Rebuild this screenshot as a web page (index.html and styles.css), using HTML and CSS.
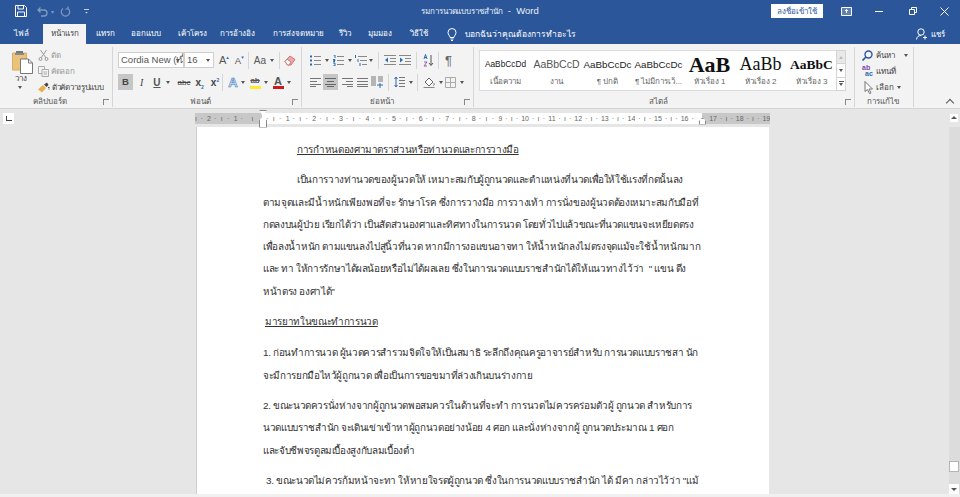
FILE: index.html
```html
<!DOCTYPE html>
<html lang="th">
<head>
    <meta charset="UTF-8">
    <meta name="viewport" content="width=device-width, initial-scale=1.0">
    <title>รมการนวดแบบราชสำนัก - Word</title>
    <link rel="stylesheet" href="styles.css">
</head>
<body>
    <header class="titlebar">
        <div class="qat">
            <svg class="qat-save" width="12" height="12" viewBox="0 0 12 12"><path d="M.5.5h9l2 2v9H.5z" fill="none" stroke="#fff"/><path d="M3 .5v3.500h5.500V.5M2.500 11.500V7h7v4.500" fill="none" stroke="#fff"/></svg>
            <svg class="qat-undo" width="11" height="11" viewBox="0 0 11 11"><path d="M1 4h6a3 3 0 0 1 0 6H4M3.500 1.500 1 4l2.500 2.500" fill="none" stroke="#7f9ac3" stroke-width="1.300"/></svg>
            <span class="qat-dim">▾</span>
            <svg class="qat-redo" width="11" height="11" viewBox="0 0 11 11"><path d="M3 2.500a4.200 4.200 0 1 0 5 0M8 .5v2.500H5.500" fill="none" stroke="#7f9ac3" stroke-width="1.200"/></svg>
            <span class="qat-more"></span>
        </div>
        <div class="doc-title"><span class="doc-name">รมการนวดแบบราชสำนัก</span> &nbsp;-&nbsp; Word</div>
        <div class="win">
            <button class="signin">ลงชื่อเข้าใช้</button>
            <svg class="win-display" width="11" height="9" viewBox="0 0 11 9"><path d="M.5.5h10v8H.5z" fill="#fff" fill-opacity=".25" stroke="#fff"/><path d="M5.500 6V2.500M4 4l1.500-1.500L7 4" stroke="#fff" fill="none"/></svg>
            <span class="win-min"></span>
            <svg class="win-restore" width="8" height="8" viewBox="0 0 8 8"><path d="M.5 2.500h5v5h-5zM2.500 2.500v-2h5v5h-2" fill="none" stroke="#fff"/></svg>
            <svg class="win-close" width="9" height="9" viewBox="0 0 9 9"><path d="M.5.5l8 8M8.500.5l-8 8" stroke="#fff"/></svg>
        </div>
    </header>

    <nav class="tabs">
        <span class="tab tab-file">ไฟล์</span>
        <span class="tab tab-active">หน้าแรก</span>
        <span class="tab tab-insert">แทรก</span>
        <span class="tab tab-design">ออกแบบ</span>
        <span class="tab tab-layout">เค้าโครง</span>
        <span class="tab tab-refs">การอ้างอิง</span>
        <span class="tab tab-mail">การส่งจดหมาย</span>
        <span class="tab tab-review">รีวิว</span>
        <span class="tab tab-view">มุมมอง</span>
        <span class="tab tab-help">วิธีใช้</span>
        <svg class="bulb" width="10" height="13" viewBox="0 0 10 13"><path d="M3 9.500C3 7.500 1 7 1 4.500a4 4 0 0 1 8 0C9 7 7 7.500 7 9.500zM3.500 11h3M4 12.500h2" fill="none" stroke="#fff"/></svg>
        <span class="tell">บอกฉันว่าคุณต้องการทำอะไร</span>
        <span class="share">
            <svg width="12" height="12" viewBox="0 0 12 12"><circle cx="5" cy="4" r="3.200" fill="none" stroke="#fff"/><path d="M.5 11.500c.5-3 2-4 4.500-4M9 7.500v4M7 9.500h4" fill="none" stroke="#fff"/></svg>
            แชร์
        </span>
    </nav>

    <section class="ribbon">
        <div class="group group-clip">
            <div class="group-body clip-body">
                <div class="paste">
                    <svg width="21" height="24" viewBox="0 0 21 24"><path d="M.5 3h14v17H.5z" fill="#e9c27c" stroke="#d9ae63"/><path d="M4 3h7V1H4z" fill="#777"/><path d="M3 3h9v2H3z" fill="#8a8a8a"/><path d="M8.500 9h8l4 4v10.500h-12z" fill="#fff" stroke="#777"/><path d="M16.500 9v4h4" fill="none" stroke="#777"/></svg>
                    <span class="paste-label">วาง</span>
                    <span class="caret"></span>
                </div>
                <div class="clip-list">
                    <div class="clip-item dim">
                        <svg width="11" height="11" viewBox="0 0 11 11"><path d="M2.500 0l5.500 8M8.500 0 3 8" stroke="#999" fill="none"/><circle cx="2.500" cy="9" r="1.500" fill="none" stroke="#999"/><circle cx="8.500" cy="9" r="1.500" fill="none" stroke="#999"/></svg>
                        ตัด
                    </div>
                    <div class="clip-item dim">
                        <svg width="11" height="11" viewBox="0 0 11 11"><path d="M.5.5h6v7h-6z" fill="#f3f3f3" stroke="#aaa"/><path d="M4 3.500h6.500v7H4z" fill="#f3f3f3" stroke="#aaa"/><path d="M5.500 6h3.500M5.500 8h3.500" stroke="#aaa"/></svg>
                        คัดลอก
                    </div>
                    <div class="clip-item">
                        <svg width="12" height="11" viewBox="0 0 12 11"><path d="M0 7.500 5 3l3 3-4 4.500z" fill="#e8b04f"/><path d="M6 2.500 8.500 5l2-2L9 .5z" fill="#444"/><path d="M10 5.500h1.500M10.500 7h1" stroke="#444"/></svg>
                        ตัวคัดวางรูปแบบ
                    </div>
                </div>
            </div>
            <div class="group-label">คลิปบอร์ด<span class="launcher"></span></div>
        </div>

        <div class="group group-font">
            <div class="group-body">
                <div class="tool-row">
                    <div class="combo combo-font">Cordia New (เนื้<span class="caret"></span></div>
                    <div class="combo combo-size">16<span class="caret"></span></div>
                    <span class="glyph grow">A<sup>▴</sup></span>
                    <span class="glyph shrink">A<sup>▾</sup></span>
                    <span class="vsep sep-a"></span>
                    <span class="glyph case">Aa</span><span class="caret caret-case"></span>
                    <span class="vsep sep-b"></span>
                    <svg class="eraser" width="12" height="12" viewBox="0 0 12 12"><path d="M1 7.500 6 2l5 3.500L7 11H3.500z" fill="#f0a6a6" stroke="#c77"/><path d="M1 7.500 3 5l4 3-2 3H3.500z" fill="#fff" stroke="#c77"/></svg>
                </div>
                <div class="tool-row">
                    <span class="btn-bold">B</span>
                    <span class="fmt fmt-i">I</span>
                    <span class="fmt fmt-u">U</span><span class="caret caret-u"></span>
                    <span class="fmt fmt-abc">abc</span>
                    <span class="fmt fmt-sub">x<sub>2</sub></span>
                    <span class="fmt fmt-sup">x<sup>2</sup></span>
                    <span class="vsep sep-c"></span>
                    <span class="glyph effect">A</span><span class="caret caret-e"></span>
                    <span class="swatch swatch-hi">ab</span><span class="caret caret-h"></span>
                    <span class="swatch swatch-col">A</span><span class="caret caret-c"></span>
                </div>
            </div>
            <div class="group-label">ฟอนต์<span class="launcher"></span></div>
        </div>

        <div class="group group-para">
            <div class="group-body">
                <div class="tool-row">
                    <svg class="ic" width="11" height="11" viewBox="0 0 11 11"><path d="M4 1.500h7M4 5.500h7M4 9.500h7" stroke="#888"/><path d="M0 .5h2v2H0zM0 4.500h2v2H0zM0 8.500h2v2H0z" fill="#2b6cb0"/></svg><span class="caret caret-p"></span>
                    <svg class="ic ic-num" width="11" height="11" viewBox="0 0 11 11"><path d="M4 1.500h7M4 5.500h7M4 9.500h7" stroke="#888"/><path d="M.5 0h1.500v3M0 4.500h2v1H.5v1H2M0 8h2v3H0" fill="none" stroke="#2b6cb0"/></svg><span class="caret caret-p"></span>
                    <svg class="ic ic-multi" width="12" height="11" viewBox="0 0 12 11"><path d="M3 1.500h9M5 5.500h7M7 9.500h5" stroke="#888"/><path d="M.5 0v3M3 4v3M5 8v3" stroke="#2b6cb0"/></svg><span class="caret caret-m"></span>
                    <span class="vsep sep-d"></span>
                    <svg class="ic ic-out" width="12" height="11" viewBox="0 0 12 11"><path d="M0 .5h12M6 3.500h6M6 6.500h6M0 9.500h12" stroke="#888"/><path d="M4 2.500v5L1 5z" fill="#2b6cb0"/></svg>
                    <svg class="ic ic-in" width="12" height="11" viewBox="0 0 12 11"><path d="M0 .5h12M6 3.500h6M6 6.500h6M0 9.500h12" stroke="#888"/><path d="M1 2.500v5L4 5z" fill="#2b6cb0"/></svg>
                    <span class="vsep sep-e"></span>
                    <svg class="ic ic-sort" width="11" height="13" viewBox="0 0 11 13"><path d="M1 5 2.500.5 4 5M1.500 3.500h2" fill="none" stroke="#2b6cb0"/><path d="M1 8h3L1 12h3" fill="none" stroke="#9b59b6"/><path d="M8 1v10M6 9l2 2.500L10 9" fill="none" stroke="#555"/></svg>
                    <span class="vsep sep-f"></span>
                    <span class="pilcrow">¶</span>
                </div>
                <div class="tool-row">
                    <svg class="ic" width="11" height="9" viewBox="0 0 11 9"><path d="M0 .5h11M0 3.500h7M0 6.500h11M0 8.500h6" stroke="#777"/></svg>
                    <span class="btn-center"><svg width="11" height="9" viewBox="0 0 11 9"><path d="M0 .5h11M2 3.500h7M0 6.500h11M2 8.500h7" stroke="#666"/></svg></span>
                    <svg class="ic ic-right" width="11" height="9" viewBox="0 0 11 9"><path d="M0 .5h11M4 3.500h7M0 6.500h11M5 8.500h6" stroke="#777"/></svg>
                    <svg class="ic ic-just" width="11" height="9" viewBox="0 0 11 9"><path d="M0 .5h11M0 3.500h11M0 6.500h11M0 8.500h11" stroke="#777"/></svg>
                    <svg class="ic ic-cols" width="12" height="12" viewBox="0 0 12 12"><path d="M0 1h5M0 3h5M0 5h5M0 7h5M0 9h5M7 1h5M7 3h5M7 5h5" stroke="#777"/><path d="M6 9h6M9 7v5" stroke="#2b6cb0"/></svg>
                    <span class="vsep sep-g"></span>
                    <svg class="ic ic-space" width="11" height="12" viewBox="0 0 11 12"><path d="M5 1.500h6M5 4.500h6M5 7.500h6M5 10.500h6" stroke="#777"/><path d="M2 1v10M.5 3 2 1l1.500 2M.5 9 2 11l1.500-2" fill="none" stroke="#2b6cb0"/></svg><span class="caret caret-p"></span>
                    <span class="vsep sep-h"></span>
                    <svg class="ic ic-shade" width="12" height="13" viewBox="0 0 12 13"><path d="M2 6l4-4 4 4-4 4z" fill="#fff" stroke="#666"/><path d="M.5 11.500h11" stroke="#888"/><path d="M10.500 7c1 1 1 2 0 2.500" stroke="#666" fill="none"/></svg><span class="caret caret-p"></span>
                    <svg class="ic ic-border" width="11" height="11" viewBox="0 0 11 11"><path d="M.5.5h10v10H.5zM5.500.5v10M.5 5.500h10" fill="none" stroke="#aaa"/></svg><span class="caret caret-p"></span>
                </div>
            </div>
            <div class="group-label">ย่อหน้า<span class="launcher"></span></div>
        </div>

        <div class="group group-styles">
            <div class="group-body gallery-wrap">
                <div class="gallery">
                    <div class="style-item"><span class="sample sample-body">AaBbCcDd</span><span class="style-name">เนื้อความ</span></div>
                    <div class="style-item"><span class="sample sample-job">AaBbCcD</span><span class="style-name">งาน</span></div>
                    <div class="style-item"><span class="sample">AaBbCcDc</span><span class="style-name">¶ ปกติ</span></div>
                    <div class="style-item"><span class="sample">AaBbCcDc</span><span class="style-name">¶ ไม่มีการเว้...</span></div>
                    <div class="style-item"><span class="sample sample-h1">AaB</span><span class="style-name">หัวเรื่อง 1</span></div>
                    <div class="style-item"><span class="sample sample-h2">AaBb</span><span class="style-name">หัวเรื่อง 2</span></div>
                    <div class="style-item"><span class="sample sample-h3">AaBbC</span><span class="style-name">หัวเรื่อง 3</span></div>
                </div>
                <div class="gallery-nav">
                    <span class="nav-btn nav-up"></span>
                    <span class="nav-btn nav-down"></span>
                    <span class="nav-btn nav-more"></span>
                </div>
            </div>
            <div class="group-label">สไตล์<span class="launcher"></span></div>
        </div>

        <div class="group group-edit">
            <div class="group-body edit-body">
                <div class="edit-item">
                    <svg width="11" height="11" viewBox="0 0 11 11"><circle cx="6.500" cy="4.500" r="3.500" fill="none" stroke="#2b579a" stroke-width="1.400"/><path d="M4 7 .5 10.500" stroke="#2b579a" stroke-width="1.600"/></svg>
                    ค้นหา<span class="caret caret-find"></span>
                </div>
                <div class="edit-item">
                    <span class="replace-ic"><b>ab</b><i>ac</i></span>
                    แทนที่
                </div>
                <div class="edit-item edit-select">
                    <svg width="9" height="13" viewBox="0 0 9 13"><path d="M1 .5v10l2.500-2L5.500 12.500 7 12 5 8h3.500z" fill="#fff" stroke="#777"/></svg>
                    เลือก<span class="caret"></span>
                </div>
            </div>
            <div class="group-label">การแก้ไข</div>
        </div>
        <span class="collapse"></span>
    </section>

    <div class="ruler-row">
        <span class="tab-stop"></span>
        <div class="ruler">
            <div class="ruler-gray ruler-left">
                <span class="rc rc-first">ı · 2</span><span class="rc">· ı · 1</span><span class="rc">· ı ·</span>
            </div>
            <div class="ruler-white">
                <span class="rc">· ı · 1</span><span class="rc">· ı · 2</span><span class="rc">· ı · 3</span><span class="rc">· ı · 4</span><span class="rc">· ı · 5</span><span class="rc">· ı · 6</span><span class="rc">· ı · 7</span><span class="rc">· ı · 8</span><span class="rc">· ı · 9</span><span class="rc">· ı · 10</span><span class="rc">· ı · 11</span><span class="rc">· ı · 12</span><span class="rc">· ı · 13</span><span class="rc">· ı · 14</span><span class="rc">· ı · 15</span><span class="rc">· ı · 16</span><span class="rc rc-end">·</span>
            </div>
            <div class="ruler-gray ruler-right">
                <span class="rc rc-17">· 17</span><span class="rc">· ı · 18</span><span class="rc">· ı · 19</span>
            </div>
            <span class="marker marker-left"></span>
            <span class="marker marker-right"></span>
        </div>
        <span class="scroll-up"></span>
    </div>

    <main class="workspace">
        <div class="page-area">
            <article class="page">
                <p class="doc-head">การกำหนดองศามาตราส่วนหรือท่านวดและการวางมือ</p>
                <p class="para">
                    <span class="line line-indent">เป็นการวางท่านวดของผู้นวดให้ เหมาะสมกับผู้ถูกนวดและตำแหน่งที่นวดเพื่อให้ใช้แรงที่กดนั้นลง</span>
                    <span class="line">ตามจุดและมีน้ำหนักเพียงพอที่จะ รักษาโรค ซึ่งการวางมือ การวางเท้า การนั่งของผู้นวดต้องเหมาะสมกับมือที่</span>
                    <span class="line">กดลงบนผู้ป่วย เรียกได้ว่า เป็นสัดส่วนองศาและทิศทางในการนวด โดยทั่วไปแล้วขณะที่นวดแขนจะเหยียดตรง</span>
                    <span class="line">เพื่อลงน้ำหนัก ตามแขนลงไปสู่นิ้วที่นวด หากมีการงอแขนอาจทา ให้น้ำหนักลงไม่ตรงจุดแม้จะใช้น้ำหนักมาก</span>
                    <span class="line">และ ทา ให้การรักษาได้ผลน้อยหรือไม่ได้ผลเลย ซึ่งในการนวดแบบราชสำนักได้ให้แนวทางไว้ว่า &nbsp;" แขน ตึง</span>
                    <span class="line">หน้าตรง องศาได้"</span>
                </p>
                <p class="doc-head doc-head-2">มารยาทในขณะทำการนวด</p>
                <p class="para">
                    <span class="line">1. ก่อนทำการนวด ผู้นวดควรสำรวมจิตใจให้เป็นสมาธิ ระลึกถึงคุณครูอาจารย์สำหรับ การนวดแบบราชสา นัก</span>
                    <span class="line">จะมีการยกมือไหว้ผู้ถูกนวด เพื่อเป็นการขอขมาที่ล่วงเกินบนร่างกาย</span>
                </p>
                <p class="para">
                    <span class="line">2. ขณะนวดควรนั่งห่างจากผู้ถูกนวดพอสมควรในด้านที่จะทำ การนวดไม่ควรคร่อมตัวผู้ ถูกนวด สำหรับการ</span>
                    <span class="line">นวดแบบราชสำนัก จะเดินเข่าเข้าหาผู้ถูกนวดอย่างน้อย 4 ศอก และนั่งห่างจากผู้ ถูกนวดประมาณ 1 ศอก</span>
                    <span class="line">และจับชีพจรดูลมเบื้องสูงกับลมเบื้องต่ำ</span>
                </p>
                <p class="para">
                    <span class="line line-nudge">3. ขณะนวดไม่ควรก้มหน้าจะทา ให้หายใจรดผู้ถูกนวด ซึ่งในการนวดแบบราชสำนัก ได้ มีคา กล่าวไว้ว่า "แม้</span>
                    <span class="line">จะนวดให้ผู้สูงศักดิ์ก็ห้ามมิให้ก้มศีรษะลงไปมากนัก ซึ่งเป็นการรักษามารยาท และเป็นการถนอมตัวเอง</span>
                </p>
            </article>
        </div>
        <aside class="scrollbar">
            <span class="thumb"></span>
            <span class="scroll-down"></span>
        </aside>
    </main>
    <footer class="status"></footer>
</body>
</html>
```

FILE: styles.css
```css
* {
    box-sizing: border-box;
}
html, body {
    height: 100%;
}
body {
    margin: 0;
    height: 497px;
    overflow: hidden;
    display: flex;
    flex-direction: column;
    font-family: "Liberation Sans", "Noto Sans", "DejaVu Sans", sans-serif;
    font-size: 8px;
    color: #444;
    background: #e6e6e6;
}
svg {
    display: block;
    flex: none;
}

/* title bar */
.titlebar {
    height: 22px;
    flex: none;
    background: #2b579a;
    color: #fff;
    display: grid;
    grid-template-columns: 1fr auto 1fr;
    align-items: center;
}
.qat {
    display: flex;
    align-items: center;
    padding-left: 15px;
}
.qat-undo {
    margin-left: 10px;
}
.qat-dim {
    color: #7f9ac3;
    font-size: 6px;
    margin-left: 3px;
}
.qat-redo {
    margin-left: 6px;
}
.qat-more {
    width: 5px;
    height: 5px;
    margin-left: 13px;
    border-top: 1px solid #ccd;
    background: linear-gradient(to bottom, transparent 2px, #dde 2px);
    clip-path: polygon(0 0, 100% 0, 100% 40%, 50% 100%, 0 40%);
}
.doc-title {
    font-size: 9.500px;
    color: #e8eef7;
    white-space: nowrap;
}
.doc-name {
    font-size: 8px;
    letter-spacing: -.1px;
}
.win {
    display: flex;
    align-items: center;
    justify-content: flex-end;
}
.signin {
    width: 52px;
    height: 14px;
    padding: 0;
    border: none;
    background: #fff;
    color: #2b579a;
    font: 8px "Liberation Sans", sans-serif;
    margin-right: 18px;
}
.win-min {
    width: 8px;
    height: 1px;
    background: #fff;
    margin: 0 26px 0 23px;
}
.win-close {
    margin: 0 11px 0 23px;
}

/* tabs */
.tabs {
    height: 22px;
    flex: none;
    background: #2b579a;
    color: #fff;
    display: flex;
    align-items: flex-end;
    white-space: nowrap;
    font-size: 8px;
}
.tab {
    height: 20px;
    line-height: 20px;
    text-align: center;
    flex: none;
}
.tab-file { width: 43px; }
.tab-active {
    width: 43px;
    background: #f3f3f3;
    color: #444;
}
.tab-insert { width: 38px; }
.tab-design { width: 44px; }
.tab-layout { width: 48px; }
.tab-refs { width: 42px; }
.tab-mail { width: 80px; }
.tab-review { width: 13px; }
.tab-view { width: 58px; }
.tab-help { width: 20px; }
.bulb {
    margin: 0 8px 3px 18px;
}
.tell {
    height: 20px;
    line-height: 20px;
    font-size: 8.500px;
}
.share {
    margin-left: auto;
    height: 20px;
    display: flex;
    align-items: center;
    gap: 3px;
    padding-right: 15px;
}

/* ribbon */
.ribbon {
    height: 65px;
    flex: none;
    background: #f3f3f3;
    border-bottom: 1px solid #d4d4d4;
    display: flex;
    position: relative;
    padding-top: 3px;
}
.group {
    display: flex;
    flex-direction: column;
    height: 60px;
    border-right: 1px solid #d6d6d6;
    position: relative;
    flex: none;
}
.group-body {
    flex: 1;
    min-height: 0;
}
.group-label {
    height: 10px;
    line-height: 10px;
    text-align: center;
    color: #555;
    white-space: nowrap;
}
.launcher {
    position: absolute;
    right: 3px;
    bottom: 2px;
    width: 6px;
    height: 6px;
    border-left: 1px solid #888;
    border-top: 1px solid #888;
}
.caret {
    display: inline-block;
    width: 0;
    height: 0;
    border-left: 2.500px solid transparent;
    border-right: 2.500px solid transparent;
    border-top: 3px solid #555;
    flex: none;
}
.tool-row {
    display: flex;
    align-items: center;
    height: 22px;
}
.vsep {
    width: 1px;
    height: 17px;
    background: #d6d6d6;
    flex: none;
}

/* clipboard */
.group-clip {
    width: 113px;
}
.group-clip .group-label {
    padding-right: 12px;
}
.clip-body {
    display: flex;
}
.paste {
    width: 38px;
    padding: 3px 0 0 12px;
    display: flex;
    flex-direction: column;
    align-items: flex-start;
    flex: none;
}
.paste-label {
    width: 17px;
    text-align: center;
    line-height: 10px;
}
.paste .caret {
    margin: 2px 0 0 6px;
}
.clip-list {
    display: flex;
    flex-direction: column;
    gap: 4px;
    padding-top: 2px;
}
.clip-item {
    display: flex;
    align-items: center;
    gap: 2px;
    height: 12px;
    white-space: nowrap;
    letter-spacing: -.3px;
}
.clip-item.dim {
    color: #999;
}

/* font group */
.group-font {
    width: 189px;
    padding-left: 5px;
}
.group-font .group-label {
    padding-right: 18px;
}
.group-font .group-body, .group-para .group-body {
    padding-top: 2px;
}
.combo {
    height: 16px;
    background: #fff;
    border: 1px solid #cfcfcf;
    font-size: 9.500px;
    line-height: 14px;
    padding-left: 2px;
    position: relative;
    white-space: nowrap;
    overflow: hidden;
    flex: none;
    color: #555;
}
.combo .caret {
    position: absolute;
    right: 3px;
    top: 6px;
}
.combo-font { width: 66px; }
.combo-size {
    width: 30px;
}
.glyph {
    font-size: 11px;
    color: #555;
    flex: none;
}
.glyph sup {
    font-size: 5px;
    color: #2b6cb0;
    vertical-align: 5px;
    line-height: 0;
}
.grow { margin-left: 5px; font-size: 11px; }
.shrink { margin-left: 6px; font-size: 9.500px; }
.sep-a { margin-left: 4px; }
.case { margin-left: 5px; font-size: 10px; }
.caret-case { margin-left: 4px; }
.sep-b { margin-left: 5px; }
.eraser { margin-left: 4px; }
.btn-bold {
    width: 15px;
    height: 16px;
    background: #c6c6c6;
    text-align: center;
    line-height: 16px;
    font-weight: bold;
    font-size: 9.500px;
    color: #444;
    flex: none;
}
.fmt {
    font-size: 10px;
    color: #444;
    flex: none;
}
.fmt sub, .fmt sup {
    font-size: 5px;
    line-height: 0;
    color: #2b6cb0;
}
.fmt-i { font-style: italic; margin-left: 7px; font-family: "Liberation Serif", serif; }
.fmt-u { text-decoration: underline; font-weight: bold; margin-left: 10px; color: #555; }
.caret-u { margin-left: 5px; }
.fmt-abc { font-size: 8px; margin-left: 8px; text-decoration: line-through; }
.fmt-sub { margin-left: 5px; font-weight: bold; }
.fmt-sup { margin-left: 7px; font-weight: bold; }
.sep-c { margin-left: 3px; }
.effect {
    margin-left: 5px;
    font-size: 13px;
    font-weight: bold;
    color: #dbe8f7;
    -webkit-text-stroke: .6px #3c78bf;
}
.caret-e, .caret-h, .caret-c {
    margin-left: 3px;
}
.swatch {
    width: 11px;
    height: 13px;
    flex: none;
    text-align: center;
    line-height: 10px;
    font-size: 8px;
    margin-left: 5px;
    font-weight: bold;
    color: #555;
}
.swatch-hi {
    border-bottom: 3px solid #ffea2e;
    text-decoration: line-through;
}
.swatch-col {
    border-bottom: 3px solid #c81b1b;
    font-size: 11px;
}

/* paragraph group */
.group-para {
    width: 172px;
    padding-left: 8px;
}
.group-para .group-label {
    padding-right: 20px;
}
.caret-p { margin-left: 4px; }
.ic-num { margin-left: 4px; }
.ic-multi { margin-left: 3px; }
.caret-m { margin-left: 2px; }
.sep-d { margin-left: 5px; }
.ic-out { margin-left: 5px; }
.ic-in { margin-left: 3px; }
.sep-e { margin-left: 5px; }
.ic-sort { margin-left: 6px; }
.sep-f { margin-left: 4px; }
.pilcrow {
    margin-left: 6px;
    font-size: 13px;
    color: #666;
}
.btn-center {
    width: 15px;
    height: 16px;
    margin-left: 2px;
    background: #c6c6c6;
    display: flex;
    align-items: center;
    justify-content: center;
    flex: none;
}
.ic-right { margin-left: 4px; }
.ic-just { margin-left: 4px; }
.ic-cols { margin-left: 3px; }
.sep-g { margin-left: 5px; }
.ic-space { margin-left: 5px; }
.sep-h { margin-left: 4px; }
.ic-shade { margin-left: 5px; }
.ic-border { margin-left: 2px; }

/* style gallery */
.group-styles {
    width: 381px;
    padding-left: 5px;
}
.group-styles .group-label {
    padding-right: 16px;
}
.gallery-wrap {
    display: flex;
}
.gallery {
    width: 357px;
    height: 41px;
    margin-top: 3px;
    background: #fff;
    border: 1px solid #dcdcdc;
    border-right: none;
    display: grid;
    grid-template-columns: repeat(7, 51px);
    overflow: hidden;
}
.style-item {
    display: flex;
    flex-direction: column;
    align-items: center;
    overflow: hidden;
    height: 39px;
    padding-top: 1px;
}
.sample {
    height: 25px;
    line-height: 25px;
    font-size: 9.800px;
    color: #222;
    white-space: nowrap;
    flex: none;
}
.sample-body {
    font-size: 8.300px;
}
.sample-job {
    font-size: 10.500px;
    color: #555;
}
.sample-h1, .sample-h2, .sample-h3 {
    font-family: "Liberation Serif", serif;
    color: #111;
}
.sample-h1 { font-size: 22px; font-weight: bold; }
.sample-h2 { font-size: 18px; }
.sample-h3 { font-size: 13.500px; font-weight: bold; }
.style-name {
    line-height: 10px;
    color: #666;
    white-space: nowrap;
}
.gallery-nav {
    width: 10px;
    height: 41px;
    margin-top: 3px;
    display: flex;
    flex-direction: column;
}
.nav-btn {
    flex: 1;
    background: #fff;
    border: 1px solid #d4d4d4;
    margin-top: -1px;
    position: relative;
}
.nav-up {
    background: #e8e8e8;
    margin-top: 0;
}
.nav-btn::after {
    content: "";
    position: absolute;
    left: 2px;
    top: 5px;
    border-left: 2.500px solid transparent;
    border-right: 2.500px solid transparent;
    border-top: 3px solid #555;
}
.nav-up::after {
    border-top: none;
    border-bottom: 3px solid #bbb;
}
.nav-more::before {
    content: "";
    position: absolute;
    left: 2px;
    top: 3px;
    width: 5px;
    height: 1px;
    background: #555;
}

/* editing */
.group-edit {
    width: 59px;
    padding-left: 7px;
}
.group-edit .group-label {
    padding-right: 10px;
}
.edit-body {
    display: flex;
    flex-direction: column;
    gap: 4px;
    padding-top: 2px;
}
.edit-item {
    display: flex;
    align-items: center;
    gap: 3px;
    height: 12px;
    white-space: nowrap;
}
.caret-find {
    margin-left: 6px;
}
.replace-ic {
    width: 11px;
    height: 12px;
    position: relative;
    font-size: 7px;
    line-height: 6px;
    flex: none;
}
.replace-ic b {
    color: #7e4aa8;
    font-weight: bold;
    display: block;
}
.replace-ic i {
    color: #2b6cb0;
    font-style: normal;
    font-weight: bold;
    display: block;
    margin-left: 3px;
}
.edit-select {
    padding-left: 2px;
}
.collapse {
    position: absolute;
    right: 7px;
    bottom: 2px;
    width: 6px;
    height: 6px;
    border-left: 1px solid #555;
    border-top: 1px solid #555;
    transform: rotate(45deg);
}

/* ruler */
.ruler-row {
    height: 18px;
    flex: none;
    display: flex;
    align-items: center;
    position: relative;
}
.tab-stop {
    width: 11px;
    height: 11px;
    margin-left: 3px;
    background: #fff;
    position: relative;
    flex: none;
}
.tab-stop::after {
    content: "";
    position: absolute;
    left: 3px;
    top: 3px;
    width: 5px;
    height: 4px;
    border-left: 1.500px solid #444;
    border-bottom: 1.500px solid #444;
}
.ruler {
    width: 575px;
    height: 11px;
    margin-left: 181px;
    display: flex;
    position: relative;
    font-size: 7px;
    line-height: 11px;
    color: #666;
    flex: none;
}
.ruler-gray {
    background: #c8c8c8;
    display: flex;
    flex: none;
}
.ruler-white {
    background: #fff;
    display: flex;
    flex: none;
    width: 440px;
    padding-left: 1px;
}
.ruler-left { width: 67px; }
.ruler-right { width: 68px; }
.rc {
    width: 26.600px;
    flex: none;
    padding-left: 3px;
    text-align: justify;
    text-align-last: justify;
    overflow: hidden;
    white-space: normal;
    height: 11px;
}
.rc-first { width: 16px; padding-left: 0; }
.rc-end { width: 11px; text-align-last: left; }
.rc-17 { width: 15px; padding-left: 0; }
.marker {
    position: absolute;
    width: 7px;
    height: 7px;
    background: #fff;
    border: 1px solid #888;
}
.marker-left {
    left: 64px;
    top: -3px;
    width: 8px;
    height: 18px;
    background: #fff;
    clip-path: polygon(0 0, 100% 0, 50% 40%, 100% 60%, 100% 100%, 0 100%, 0 60%, 50% 40%);
}
.marker-right {
    left: 504px;
    top: 5px;
    clip-path: polygon(50% 0, 100% 50%, 100% 100%, 0 100%, 0 50%);
}
.scroll-up {
    margin-left: auto;
    margin-right: 2px;
    width: 8px;
    height: 8px;
    background: #fff;
    position: relative;
    flex: none;
}
.scroll-up::after {
    content: "";
    position: absolute;
    left: 1px;
    top: 2px;
    border-left: 3px solid transparent;
    border-right: 3px solid transparent;
    border-bottom: 3px solid #555;
}

/* document */
.workspace {
    flex: 1;
    min-height: 0;
    display: flex;
}
.page-area {
    flex: 1;
    min-width: 0;
    overflow: hidden;
    padding-left: 197px;
}
.page {
    width: 572px;
    height: 100%;
    background: #fff;
    overflow: hidden;
    padding: 12px 0 0 66px;
    font-size: 9.900px;
    letter-spacing: -.35px;
    line-height: 22.300px;
    color: #333;
    box-shadow: -1px 0 0 #cfcfcf;
}
.page p {
    margin: 0;
    white-space: nowrap;
}
.doc-head {
    padding-left: 34px;
    text-decoration: underline;
    margin-bottom: 8px !important;
}
.doc-head-2 {
    padding-left: 0;
    margin: 2px 0 9px 2px !important;
}
.para {
    margin-bottom: 8px !important;
}
.line {
    display: block;
}
.line-indent {
    padding-left: 34px;
}
.line-nudge {
    padding-left: 3px;
}
.scrollbar {
    width: 15px;
    padding: 0 1px 0 4px;
    display: flex;
    flex-direction: column;
    justify-content: flex-end;
    background: linear-gradient(to right, #e6e6e6 4px, #dcdcdc 4px);
}
.thumb {
    height: 11px;
    background: #fff;
    border: 1px solid #b5b5b5;
    margin-bottom: 12px;
    flex: none;
}
.scroll-down {
    height: 10px;
    background: #fff;
    position: relative;
    flex: none;
}
.scroll-down::after {
    content: "";
    position: absolute;
    left: 2px;
    top: 4px;
    border-left: 3px solid transparent;
    border-right: 3px solid transparent;
    border-top: 3px solid #555;
}
.status {
    height: 3px;
    flex: none;
    background: #f0f0f0;
}
```
